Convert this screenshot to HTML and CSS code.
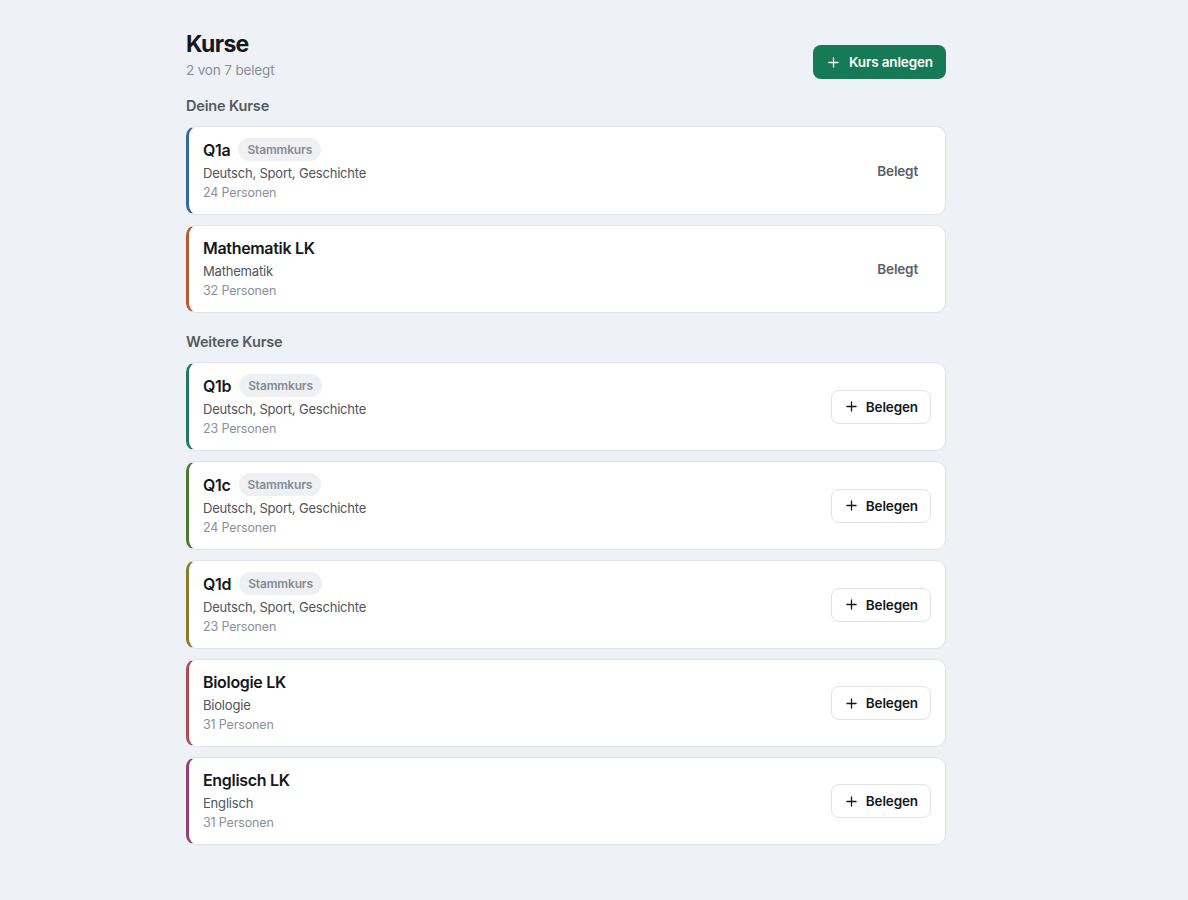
FILE: index.html
```html
<!DOCTYPE html>
<html lang="de">
<head>
<meta charset="utf-8">
<title>Kurse</title>
<link rel="stylesheet" href="styles.css">
</head>
<body>
<main class="page">
  <header class="head">
    <div>
      <h1 class="title">Kurse</h1>
      <div class="subtitle">2 von 7 belegt</div>
    </div>
    <button class="btn-primary"><svg class="plus" viewBox="0 0 12 12"><path d="M6 1v10M1 6h10"/></svg>Kurs anlegen</button>
  </header>

  <h2 class="section">Deine Kurse</h2>
  <div class="list">
    <div class="card c-blue">
      <div class="info">
        <div class="name-row has-tag"><span class="name">Q1a</span><span class="tag">Stammkurs</span></div>
        <div class="subjects">Deutsch, Sport, Geschichte</div>
        <div class="count">24 Personen</div>
      </div>
      <span class="status">Belegt</span>
    </div>
    <div class="card c-orange">
      <div class="info">
        <div class="name-row"><span class="name">Mathematik LK</span></div>
        <div class="subjects">Mathematik</div>
        <div class="count">32 Personen</div>
      </div>
      <span class="status">Belegt</span>
    </div>
  </div>

  <h2 class="section second">Weitere Kurse</h2>
  <div class="list">
    <div class="card c-teal">
      <div class="info">
        <div class="name-row has-tag"><span class="name">Q1b</span><span class="tag">Stammkurs</span></div>
        <div class="subjects">Deutsch, Sport, Geschichte</div>
        <div class="count">23 Personen</div>
      </div>
      <button class="btn-outline"><svg class="plus" viewBox="0 0 12 12"><path d="M6 1v10M1 6h10"/></svg>Belegen</button>
    </div>
    <div class="card c-green">
      <div class="info">
        <div class="name-row has-tag"><span class="name">Q1c</span><span class="tag">Stammkurs</span></div>
        <div class="subjects">Deutsch, Sport, Geschichte</div>
        <div class="count">24 Personen</div>
      </div>
      <button class="btn-outline"><svg class="plus" viewBox="0 0 12 12"><path d="M6 1v10M1 6h10"/></svg>Belegen</button>
    </div>
    <div class="card c-olive">
      <div class="info">
        <div class="name-row has-tag"><span class="name">Q1d</span><span class="tag">Stammkurs</span></div>
        <div class="subjects">Deutsch, Sport, Geschichte</div>
        <div class="count">23 Personen</div>
      </div>
      <button class="btn-outline"><svg class="plus" viewBox="0 0 12 12"><path d="M6 1v10M1 6h10"/></svg>Belegen</button>
    </div>
    <div class="card c-red">
      <div class="info">
        <div class="name-row"><span class="name">Biologie LK</span></div>
        <div class="subjects">Biologie</div>
        <div class="count">31 Personen</div>
      </div>
      <button class="btn-outline"><svg class="plus" viewBox="0 0 12 12"><path d="M6 1v10M1 6h10"/></svg>Belegen</button>
    </div>
    <div class="card c-magenta">
      <div class="info">
        <div class="name-row"><span class="name">Englisch LK</span></div>
        <div class="subjects">Englisch</div>
        <div class="count">31 Personen</div>
      </div>
      <button class="btn-outline"><svg class="plus" viewBox="0 0 12 12"><path d="M6 1v10M1 6h10"/></svg>Belegen</button>
    </div>
  </div>
</main>
</body>
</html>
```

FILE: styles.css
```css
* { box-sizing: border-box; }
html, body { margin: 0; padding: 0; }
body {
  background: #eef1f5;
  font-family: Inter, "Noto Sans", sans-serif;
  color: #15181d;
  letter-spacing: -0.01em;
}
.page {
  width: 760px;
  margin: 0 0 0 186px;
  padding: 30px 0 40px;
}
.head {
  display: flex;
  justify-content: space-between;
  align-items: flex-start;
}
.title {
  margin: 0;
  font-size: 23px;
  line-height: 28px;
  font-weight: 700;
  letter-spacing: -0.03em;
}
.subtitle {
  margin-top: 2px;
  font-size: 13.5px;
  line-height: 20px;
  color: #8a9099;
}
.btn-primary {
  display: flex;
  align-items: center;
  gap: 10px;
  height: 34px;
  padding: 0 13px 0 15px;
  margin-top: 15px;
  border: none;
  border-radius: 8px;
  background: #157a55;
  color: #fff;
  font-family: inherit;
  font-size: 13.5px;
  font-weight: 600;
  letter-spacing: -0.01em;
}
.plus {
  width: 11px;
  height: 11px;
  fill: none;
  stroke: currentColor;
  stroke-width: 1.4;
  stroke-linecap: round;
}
.section {
  margin: 16px 0 10px;
  font-size: 14.5px;
  line-height: 20px;
  font-weight: 600;
  color: #535a63;
}
.section.second { margin-top: 19px; }
.list {
  display: flex;
  flex-direction: column;
  gap: 10px;
}
.card {
  display: flex;
  align-items: center;
  justify-content: space-between;
  background: #fff;
  border: 1px solid #e1e4e9;
  border-left: 3px solid;
  border-radius: 10px;
  padding: 11px 14px 11px 14px;
}
.c-blue { border-left-color: #2e6aa8; }
.c-orange { border-left-color: #b85a2c; }
.c-teal { border-left-color: #1f7a64; }
.c-green { border-left-color: #4a7a2e; }
.c-olive { border-left-color: #8a7a2a; }
.c-red { border-left-color: #b5484f; }
.c-magenta { border-left-color: #9a3d72; }
.info { display: flex; flex-direction: column; }
.name-row {
  display: flex;
  align-items: center;
  gap: 8px;
  height: 22px;
}
.name-row.has-tag { height: 23px; }
.name {
  font-size: 16px;
  font-weight: 600;
  letter-spacing: -0.02em;
}
.tag {
  display: inline-flex;
  align-items: center;
  height: 23px;
  padding: 0 9px;
  border-radius: 12px;
  background: #eef0f3;
  color: #868c95;
  font-size: 12px;
  font-weight: 600;
}
.subjects {
  margin-top: 2px;
  font-size: 13px;
  line-height: 20px;
  color: #4e555e;
  letter-spacing: -0.015em;
}
.count {
  font-size: 12.5px;
  line-height: 20px;
  color: #8b9098;
}
.status {
  display: flex;
  align-items: center;
  height: 34px;
  padding: 0 13px;
  font-size: 13.5px;
  font-weight: 600;
  color: #59606a;
}
.btn-outline {
  display: flex;
  align-items: center;
  gap: 9px;
  height: 34px;
  padding: 0 12px 0 14px;
  background: #fff;
  border: 1px solid #dfe2e7;
  border-radius: 8px;
  font-family: inherit;
  font-size: 13.5px;
  font-weight: 600;
  color: #15181d;
  letter-spacing: -0.01em;
}
```
